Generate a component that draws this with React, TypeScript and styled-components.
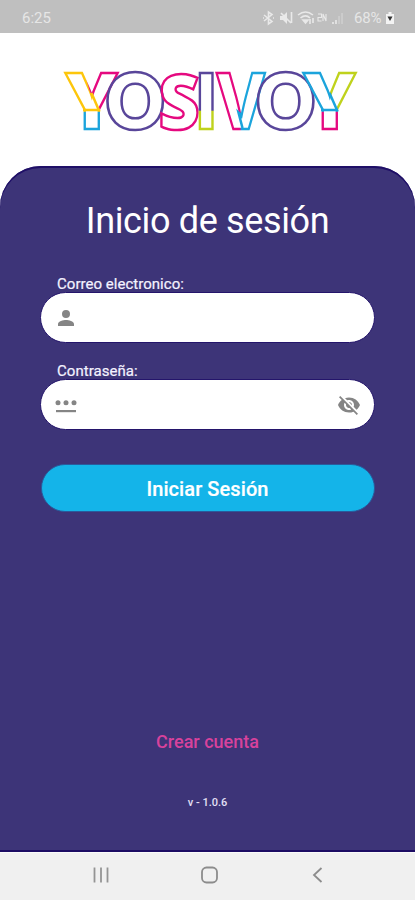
import React from "react";
import styled, { createGlobalStyle } from "styled-components";

const GlobalStyle = createGlobalStyle`
  * { box-sizing: border-box; }
  body { margin: 0; background: #fff; font-family: Roboto, "Liberation Sans", sans-serif; }
`;

const Screen = styled.div`
  width: 415px;
  height: 900px;
  display: flex;
  flex-direction: column;
  overflow: hidden;
  background: #fff;
`;

const StatusBar = styled.header`
  height: 33px;
  flex: none;
  display: flex;
  align-items: center;
  justify-content: space-between;
  padding: 2px 20px 0 22px;
  background: #bfbfbf;
  color: #e6e6e6;
  font-size: 15px;
`;

const StatusIcons = styled.div`
  display: flex;
  align-items: center;
  svg { display: block; }
`;

const Percent = styled.span`
  width: 28px;
  margin: 0 3px 0 2px;
  white-space: nowrap;
  letter-spacing: -0.2px;
`;

const LogoArea = styled.div`
  height: 133px;
  flex: none;
  padding: 18px 0 0 60px;
  svg { display: block; }
`;

const Panel = styled.main`
  flex: 1;
  display: flex;
  flex-direction: column;
  align-items: center;
  padding: 33px 39px 0;
  background: #3d3478;
  border-radius: 41px 41px 0 0;
  box-shadow: inset 0 2px 0 #1f0f67, inset 0 -2px 0 #1c0c63;
`;

const Title = styled.h1`
  margin: 0;
  height: 44px;
  line-height: 44px;
  font-size: 36px;
  font-weight: 400;
  letter-spacing: -0.35px;
  color: #fff;
  white-space: nowrap;
`;

const Field = styled.label<{ $gap: number }>`
  display: flex;
  flex-direction: column;
  width: 335px;
  margin-top: ${(p) => p.$gap}px;
`;

const FieldLabel = styled.span`
  height: 17px;
  line-height: 19px;
  padding-left: 17px;
  font-size: 15px;
  letter-spacing: 0.03px;
  color: #f4f2ff;
  -webkit-text-stroke: 0.2px #f4f2ff;
`;

const InputBox = styled.span`
  height: 51px;
  display: flex;
  align-items: center;
  padding: 0 13px;
  border: 1px solid #24156b;
  border-radius: 26px;
  background: #fff;
  svg { display: block; flex: none; }
`;

const Input = styled.input`
  flex: 1;
  min-width: 0;
  border: 0;
  outline: 0;
  background: transparent;
  font: 16px Roboto, sans-serif;
`;

const Submit = styled.button`
  width: 334px;
  height: 48px;
  margin-top: 34px;
  border: 1px solid #2a5a9c;
  border-radius: 24px;
  background: #14b4e9;
  color: #fff;
  font: 500 20px/46px Roboto, sans-serif;
  letter-spacing: 0.08px;
  padding: 1px 0 0;
  -webkit-text-stroke: 0.2px #fff;
`;

const CreateLink = styled.a`
  margin-top: 218px;
  height: 24px;
  line-height: 24px;
  font-size: 18px;
  font-weight: 500;
  color: #d8429c;
`;

const Version = styled.span`
  margin-top: 42px;
  height: 14px;
  line-height: 14px;
  font-size: 11px;
  font-weight: 500;
  color: #e4e0f6;
`;

const NavBar = styled.nav`
  height: 48px;
  flex: none;
  display: flex;
  align-items: center;
  justify-content: space-between;
  padding: 0 88px 4px 91px;
  background: #f0f0f0;
  border-top: 1px solid #fafafa;
`;

const YELLOW = "#fdc60b";
const PINK = "#e5097f";
const BLUE = "#1ba4dc";
const PURPLE = "#59469a";
const LIME = "#bfd21c";

const LogoText = styled.text<{ $weight: number; $family: string; $size: number }>`
  font-family: ${(p) => p.$family}, "Liberation Sans", sans-serif;
  font-weight: ${(p) => p.$weight};
  font-size: ${(p) => p.$size}px;
  fill: none;
  stroke-width: 2.5px;
  stroke-linejoin: miter;
`;

type LetterProps = {
  ch: string;
  x: number;
  sx: number;
  paint: string;
  weight?: number;
  family?: string;
  size?: number;
};
const Letter = ({ ch, x, sx, paint, weight = 800, family = "Inter", size = 77 }: LetterProps) => (
  <LogoText
    $weight={weight}
    $family={family}
    $size={size}
    transform={`translate(${x} 62.7) scale(${sx} 1)`}
    textAnchor="middle"
    stroke={paint}
  >
    {ch}
  </LogoText>
);

/* Patterns live in each letter's own space: x = 0 is its centre, y = 0 its baseline. */
const Logo = () => (
  <svg width="300" height="105" viewBox="0 -15 300 105" role="img" aria-label="YOSIVOY">
    <defs>
      <pattern id="y1" patternUnits="userSpaceOnUse" x="-40" y="-65" width="80" height="75">
        <rect width="80" height="75" fill={YELLOW} />
        <path d="M30 0H80V75H49V46L40 31L38 27Z" fill={PINK} />
        <rect y="48" width="80" height="27" fill={BLUE} />
      </pattern>
      <pattern id="y2" patternUnits="userSpaceOnUse" x="-40" y="-65" width="80" height="75">
        <rect width="80" height="75" fill={BLUE} />
        <path d="M40 0H80V75H49V46L41 31L40 27Z" fill={LIME} />
        <rect y="48" width="80" height="27" fill={PINK} />
      </pattern>
      <pattern id="i" patternUnits="userSpaceOnUse" x="-20" y="-65" width="40" height="75">
        <rect width="40" height="75" fill={PURPLE} />
        <rect y="47" width="40" height="28" fill={LIME} />
      </pattern>
      <pattern id="v" patternUnits="userSpaceOnUse" x="-40" y="-65" width="80" height="75">
        <rect width="80" height="75" fill={PINK} />
        <path d="M40 0H80V75H41L38 53L40 48Z" fill={BLUE} />
      </pattern>
    </defs>
    <Letter ch="Y" x={31.5} sx={0.93} weight={900} paint="url(#y1)" />
    <Letter ch="O" x={75.2} sx={1.04} paint={PURPLE} />
    <Letter ch="S" x={119.2} sx={0.95} weight={800} family="'Open Sans'" size={76} paint={PINK} />
    <Letter ch="I" x={146.3} sx={0.95} paint="url(#i)" />
    <Letter ch="V" x={180.8} sx={0.87} paint="url(#v)" />
    <Letter ch="O" x={225.8} sx={1.04} paint={PURPLE} />
    <Letter ch="Y" x={269.5} sx={0.93} weight={900} paint="url(#y2)" />
    <g strokeWidth="2.5" fill="none">
      <path d="M31.500 27L38.800 44H23" stroke={YELLOW} />
      <path d="M269.500 27L277 44H261" stroke={BLUE} />
      <path d="M181 49L178.500 46.500L182.500 62" stroke={BLUE} />
    </g>
  </svg>
);

const SystemIcons = () => (
  <svg width="92" height="18" viewBox="0 0 92 18" fill="none" stroke="#e9e9e9" strokeWidth="1.600">
    <path d="M4 6L12 12.500L8.500 15V3L12 5.500L4 12M3 9H4M13 9H14" />
    <path d="M20 7H23L27 3V15L23 11H20Z" fill="#e9e9e9" stroke="none" />
    <path d="M21 4L31 14M31.500 3V14" />
    <path d="M38 6C43 2 48 2 53 6M40.500 9C44 6 47 6 50 9" />
    <path d="M43 11L45.500 14L48 11Z" fill="#e9e9e9" />
    <path d="M50 10V15M53 9V14" />
    <path d="M58 5H61.500V8.500H58V12H61.500M63 12V5L66 12V5" strokeWidth="1.100" />
    <path d="M73 15V13M76 15V11" />
    <path d="M79 15V7M82 15V4" opacity=".4" />
  </svg>
);

const Battery = () => (
  <svg width="10" height="14" viewBox="0 0 10 14">
    <path d="M3.500 1H6.500V3H9V13H1V3H3.500Z" fill="#f3f3f3" />
    <path d="M2.500 5.500H7.500L5 10Z" fill="#333" />
  </svg>
);

export default function App() {
  return (
    <>
      <GlobalStyle />
      <Screen>
        <StatusBar>
          <span>6:25</span>
          <StatusIcons>
            <SystemIcons />
            <Percent>68%</Percent>
            <Battery />
          </StatusIcons>
        </StatusBar>
        <LogoArea>
          <Logo />
        </LogoArea>
        <Panel>
          <Title>Inicio de sesión</Title>
          <Field $gap={32}>
            <FieldLabel>Correo electronico:</FieldLabel>
            <InputBox>
              <svg width="24" height="24" viewBox="0 0 24 24" fill="#858585">
                <path d="M12 12a4 4 0 1 0 0-8 4 4 0 0 0 0 8zm0 2c-2.670 0-8 1.340-8 4v2h16v-2c0-2.660-5.330-4-8-4z" />
              </svg>
              <Input type="email" />
            </InputBox>
          </Field>
          <Field $gap={19}>
            <FieldLabel>Contraseña:</FieldLabel>
            <InputBox>
              <svg width="24" height="24" viewBox="0 0 24 24" fill="#858585">
                <circle cx="4" cy="9.800" r="2.500" />
                <circle cx="12" cy="9.800" r="2.500" />
                <circle cx="20" cy="9.800" r="2.500" />
                <rect x="2" y="17" width="20" height="2.200" />
              </svg>
              <Input type="password" />
              <svg width="24" height="24" viewBox="0 0 24 24" fill="#858585">
                <path d="M12 7c2.760 0 5 2.240 5 5 0 .65-.13 1.260-.36 1.830l2.920 2.920c1.510-1.260 2.700-2.890 3.430-4.750-1.730-4.390-6-7.500-11-7.500-1.400 0-2.740.25-3.980.7l2.160 2.160C10.740 7.130 11.350 7 12 7zM2 4.270l2.280 2.280.46.46C3.080 8.300 1.780 10.020 1 12c1.730 4.390 6 7.500 11 7.500 1.550 0 3.030-.3 4.380-.84l.42.42L19.730 22 21 20.730 3.270 3 2 4.270zM7.530 9.800l1.550 1.550c-.05.21-.08.43-.08.65 0 1.660 1.340 3 3 3 .22 0 .44-.03.65-.08l1.550 1.550c-.67.33-1.410.53-2.200.53-2.760 0-5-2.240-5-5 0-.79.2-1.530.53-2.200zm4.310-.78l3.150 3.150.02-.16c0-1.660-1.340-3-3-3l-.17.01z" />
              </svg>
            </InputBox>
          </Field>
          <Submit type="button">Iniciar Sesión</Submit>
          <CreateLink>Crear cuenta</CreateLink>
          <Version>v - 1.0.6</Version>
        </Panel>
        <NavBar>
          <svg width="20" height="18" viewBox="0 0 20 18" stroke="#949494" strokeWidth="1.800">
            <path d="M3.500 1.500V16.500M10 1.500V16.500M16.500 1.500V16.500" />
          </svg>
          <svg width="18" height="18" viewBox="0 0 18 18" fill="none" stroke="#8c8c8c" strokeWidth="1.800">
            <rect x="1" y="1.500" width="15" height="15" rx="4.500" />
          </svg>
          <svg width="18" height="18" viewBox="0 0 18 18" fill="none" stroke="#8c8c8c" strokeWidth="1.800">
            <path d="M12.500 2L5 9L12.500 16" />
          </svg>
        </NavBar>
      </Screen>
    </>
  );
}
